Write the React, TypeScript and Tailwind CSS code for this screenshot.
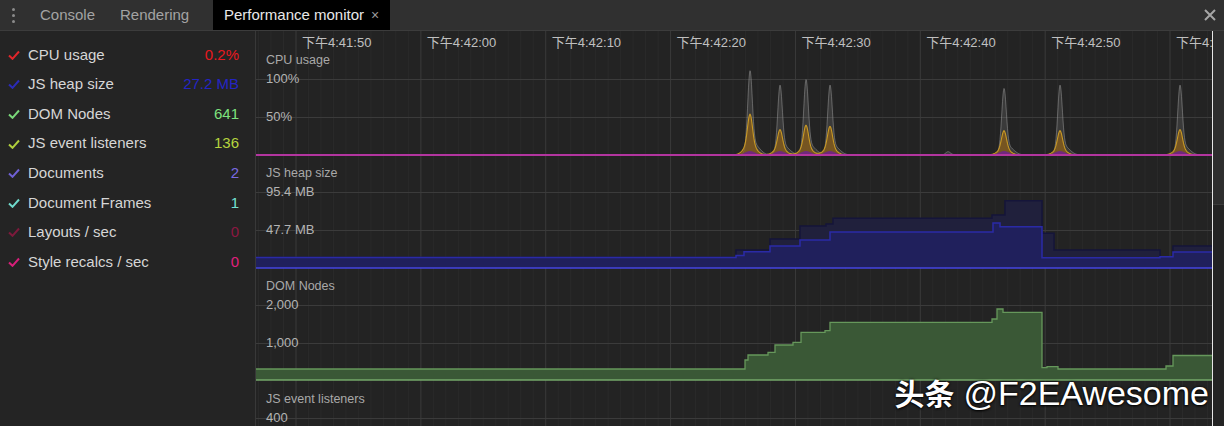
import type { ReactNode } from "react";

const W = 956;
const SECTION_H = 113;
const BASE = 105;

const METRICS = [
  { name: "CPU usage", value: "0.2%", check: "#e0262b", color: "#e8191f" },
  { name: "JS heap size", value: "27.2 MB", check: "#2b2bb8", color: "#2424c4" },
  { name: "DOM Nodes", value: "641", check: "#7ad97a", color: "#7ee27e" },
  { name: "JS event listeners", value: "136", check: "#b0cf3c", color: "#b6d43e" },
  { name: "Documents", value: "2", check: "#6f60d4", color: "#7a6ae2" },
  { name: "Document Frames", value: "1", check: "#6fd9cb", color: "#74e2d4" },
  { name: "Layouts / sec", value: "0", check: "#7d1a3c", color: "#8c1842" },
  { name: "Style recalcs / sec", value: "0", check: "#d81f7a", color: "#e0207e" },
];

const TIMES = [
  "下午4:41:50",
  "下午4:42:00",
  "下午4:42:10",
  "下午4:42:20",
  "下午4:42:30",
  "下午4:42:40",
  "下午4:42:50",
  "下午4:43:00",
];

const MAJOR = TIMES.map((_, i) => 40 + i * 124.86);

// cpu spikes: x, grey height, orange height (px above baseline)
const SPIKES = [
  { x: 494, g: 76, o: 37 },
  { x: 524, g: 63, o: 23 },
  { x: 550, g: 68, o: 27 },
  { x: 574, g: 63, o: 26 },
  { x: 692, g: 3, o: 0 },
  { x: 748, g: 60, o: 22 },
  { x: 804, g: 63, o: 22 },
  { x: 924, g: 63, o: 23 },
];

// step series in page coords [x, y]
const HEAP_USED: [number, number][] = [
  [256, 257.5], [736, 255.5], [744, 251.7], [770, 246], [800, 240], [830, 232],
  [993, 223], [1000, 226.7], [1042, 257.7], [1160, 256.7], [1173, 252], [1212, 252],
];
const HEAP_TOTAL: [number, number][] = [
  [256, 257.5], [736, 250], [770, 239], [800, 226], [826, 224], [833, 218.3],
  [992, 215], [1005, 200.7], [1042, 233.3], [1054, 250], [1160, 257.7], [1173, 246], [1212, 246],
];
const DOM: [number, number][] = [
  [256, 369], [745, 360], [748, 355], [768, 352.3], [775, 345], [793, 342.3],
  [801, 332.3], [825, 330.7], [830, 322.3], [992, 319], [997, 309], [1003, 312.3],
  [1042, 367.7], [1047, 366.7], [1058, 369], [1166, 366], [1173, 355.5], [1212, 355.5],
];

const g = (x: number, c: number, s: number) => Math.exp(-(((x - c) / s) ** 2));

function area(fn: (x: number) => number) {
  let d = `M 0 ${BASE}`;
  for (let x = 0; x <= W; x += 0.5) d += ` L ${x} ${(BASE - fn(x)).toFixed(2)}`;
  return d + ` L ${W} ${BASE} Z`;
}

function steps(pts: [number, number][], oy: number, base: number, closed: boolean) {
  let d = closed ? `M 0 ${base} V ${pts[0][1] - oy}` : `M 0 ${pts[0][1] - oy}`;
  for (let i = 1; i < pts.length; i++) {
    d += ` H ${pts[i][0] - 256} V ${(pts[i][1] - oy).toFixed(1)}`;
  }
  if (closed) d += ` V ${base} Z`;
  return d;
}

const greyPath = area((x) =>
  SPIKES.reduce((s, p) => s + p.g * g(x, p.x, 3.2) + p.g * 0.14 * g(x, p.x + 4, 8), 0)
);
const orangePath = area((x) =>
  SPIKES.reduce((s, p) => s + p.o * 0.8 * g(x, p.x, 3.4) + p.o * 0.3 * g(x, p.x, 8), 0)
);
const purplePath = area((x) =>
  SPIKES.reduce((s, p) => s + (p.o > 0 ? 4 * g(x, p.x, 7) : 0), 0)
);

function Check({ color }: { color: string }) {
  return (
    <svg width="12" height="10" viewBox="0 0 12 10" className="shrink-0">
      <path d="M1 5.5 L4.5 8.8 L11 1.5" fill="none" stroke={color} strokeWidth="2" />
    </svg>
  );
}

function TopBar() {
  return (
    <div className="flex h-[31px] shrink-0 items-stretch border-b border-[#3c3c3c] bg-[#303030] text-[15px]">
      <div className="flex w-[27px] flex-col items-center justify-center gap-[3px]">
        <span className="h-[3px] w-[3px] rounded-full bg-[#8b8b8b]" />
        <span className="h-[3px] w-[3px] rounded-full bg-[#8b8b8b]" />
        <span className="h-[3px] w-[3px] rounded-full bg-[#8b8b8b]" />
      </div>
      <div className="flex w-[80px] items-center pl-[13px] text-[#a3a3a3]">Console</div>
      <div className="flex w-[106px] items-center pl-[13px] text-[#a3a3a3]">Rendering</div>
      <div className="flex w-[177px] items-center bg-black pl-[11px] text-[#e8e8e8]">
        Performance monitor
        <span className="ml-[7px] text-[14px] text-[#9a9a9a]">×</span>
      </div>
      <div className="flex-1" />
      <div className="mr-[7px] flex items-center">
        <svg width="14" height="14" viewBox="0 0 14 14">
          <path d="M2 2 L12 12 M12 2 L2 12" stroke="#a6a6a6" strokeWidth="2" />
        </svg>
      </div>
    </div>
  );
}

function MetricList() {
  return (
    <div className="flex w-[256px] shrink-0 flex-col border-r border-[#383838] bg-[#242424] pl-[8px] pr-[16px] pt-[9px] text-[15px]">
      {METRICS.map((m) => (
        <div key={m.name} className="flex h-[29.6px] items-center">
          <Check color={m.check} />
          <span className="ml-[8px] text-[#d6d6d6]">{m.name}</span>
          <span className="ml-auto" style={{ color: m.color }}>
            {m.value}
          </span>
        </div>
      ))}
    </div>
  );
}

function Section({
  title,
  labels,
  children,
  className,
}: {
  title: string;
  labels: string[];
  children?: ReactNode;
  className?: string;
}) {
  return (
    <div className={`relative overflow-hidden ${className ?? "h-[113px] shrink-0"}`}>
      <svg width={W} height={SECTION_H} className="absolute left-0 top-0">
        <line x1="0" x2={W} y1="29.5" y2="29.5" stroke="#3b3b3b" />
        {labels.length > 1 && <line x1="0" x2={W} y1="67.5" y2="67.5" stroke="#3b3b3b" />}
        {children}
      </svg>
      <div className="absolute left-[10px] top-[4px] text-[12.5px] leading-none text-[#a9a9a9]">{title}</div>
      <div className="absolute left-[10px] top-[22px] text-[13px] leading-none text-[#b3b3b3]">{labels[0]}</div>
      {labels[1] && (
        <div className="absolute left-[10px] top-[60px] text-[13px] leading-none text-[#b3b3b3]">{labels[1]}</div>
      )}
    </div>
  );
}

function Charts() {
  const minor: number[] = [];
  for (let k = -3; k < 80; k++) {
    const x = 40 + k * 12.486;
    if (x > 0 && x < W && k % 10 !== 0) minor.push(x);
  }
  return (
    <div className="relative flex w-[956px] shrink-0 flex-col overflow-hidden bg-[#232323]">
      <svg width={W} height="400" className="absolute left-0 top-0">
        {minor.map((x) => (
          <line key={x} x1={x} x2={x} y1="0" y2="400" stroke="#2a2a2a" />
        ))}
        {MAJOR.map((x) => (
          <line key={x} x1={x} x2={x} y1="0" y2="400" stroke="#3a3a3a" />
        ))}
      </svg>

      <div className="relative h-[19px] shrink-0">
        {TIMES.map((t, i) => (
          <span
            key={t}
            className="absolute top-[5px] whitespace-nowrap text-[13px] leading-none text-[#c0c0c0]"
            style={{ left: MAJOR[i] + 6 }}
          >
            {t}
          </span>
        ))}
      </div>

      <Section title="CPU usage" labels={["100%", "50%"]}>
        <path d={greyPath} fill="rgba(140,140,140,0.22)" stroke="rgba(160,160,160,0.5)" strokeWidth="1" />
        <path d={orangePath} fill="rgba(150,100,20,0.65)" stroke="#c99a26" strokeWidth="1.1" />
        <path d={purplePath} fill="rgba(110,35,140,0.85)" />
        <line x1="0" x2={W} y1={BASE} y2={BASE} stroke="#b3359f" strokeWidth="2" />
      </Section>

      <Section title="JS heap size" labels={["95.4 MB", "47.7 MB"]}>
        <path d={steps(HEAP_TOTAL, 163, BASE, true)} fill="#20203c" />
        <path d={steps(HEAP_TOTAL, 163, BASE, false)} fill="none" stroke="#15153a" strokeWidth="1.5" />
        <path d={steps(HEAP_USED, 163, BASE, true)} fill="#20205c" />
        <path d={steps(HEAP_USED, 163, BASE, false)} fill="none" stroke="#2a2aa6" strokeWidth="1.5" />
        <line x1="0" x2={W} y1={BASE} y2={BASE} stroke="#4444e0" strokeWidth="1.5" />
      </Section>

      <Section title="DOM Nodes" labels={["2,000", "1,000"]}>
        <path d={steps(DOM, 276, 104, true)} fill="#3a5836" />
        <path d={steps(DOM, 276, 104, false)} fill="none" stroke="#66985b" strokeWidth="1.3" />
        <line x1="0" x2={W} y1="104" y2="104" stroke="#74a86a" strokeWidth="1.5" />
      </Section>

      <Section title="JS event listeners" labels={["400"]} className="min-h-0 flex-1" />
    </div>
  );
}

export default function App() {
  return (
    <div className="relative flex h-[426px] w-[1224px] flex-col overflow-hidden bg-[#242424] font-['Liberation_Sans','Noto_Sans_CJK_SC',sans-serif]">
      <TopBar />
      <div className="flex min-h-0 flex-1">
        <MetricList />
        <Charts />
        <div className="w-px shrink-0 bg-[#e6e6e6]" />
        <div className="flex flex-1 flex-col">
          <div className="h-[174px] border-b border-[#3c3c3c] bg-[#2e2e2e]" />
          <div className="flex-1 bg-[#232323]" />
        </div>
      </div>
      <div className="absolute right-[15px] top-[376px] flex items-baseline whitespace-nowrap leading-none text-white [text-shadow:0_0_3px_rgba(0,0,0,0.95),0_1px_2px_rgba(0,0,0,0.9)]">
        <span className="font-['Noto_Sans_CJK_SC',sans-serif] text-[30px] font-bold">头条</span>
        <span className="ml-[9px] text-[34px]">@F2EAwesome</span>
      </div>
    </div>
  );
}
